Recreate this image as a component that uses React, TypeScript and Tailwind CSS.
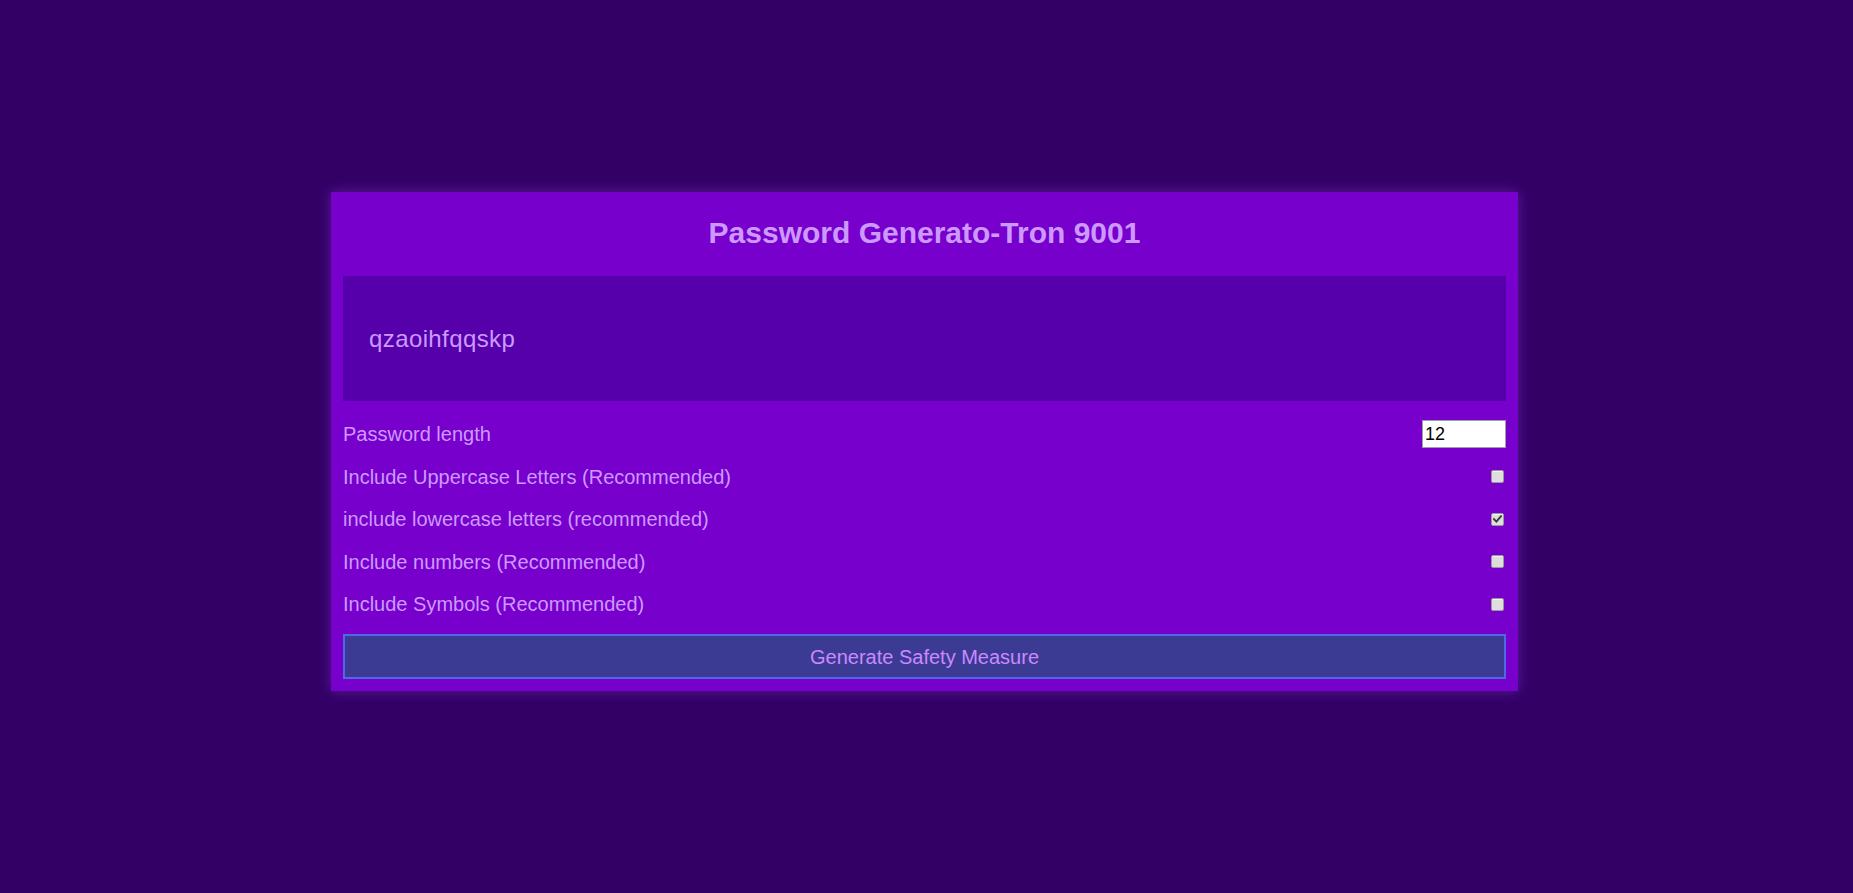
import { useState } from 'react';

const OPTIONS = [
  { id: 'upper', label: 'Include Uppercase Letters (Recommended)', checked: false },
  { id: 'lower', label: 'include lowercase letters (recommended)', checked: true },
  { id: 'numbers', label: 'Include numbers (Recommended)', checked: false },
  { id: 'symbols', label: 'Include Symbols (Recommended)', checked: false },
];

function Checkbox({ id, checked, onChange }: { id: string; checked: boolean; onChange: (v: boolean) => void }) {
  return (
    <label htmlFor={id} className="mr-[2px] flex h-[13px] w-[13px] cursor-pointer items-center justify-center rounded-[2px] border border-[#9a9a9a] bg-[#dedede] shadow-[inset_0_1px_0_#f2f2f2]">
      <input
        id={id}
        type="checkbox"
        checked={checked}
        onChange={(e) => onChange(e.target.checked)}
        className="sr-only"
      />
      {checked && (
        <svg width="9" height="8" viewBox="0 0 9 8">
          <path d="M1 4.2 L3.4 6.6 L8 1.2" fill="none" stroke="#3a3a3a" strokeWidth="1.9" strokeLinecap="square" />
        </svg>
      )}
    </label>
  );
}

export default function App() {
  const [length, setLength] = useState('12');
  const [opts, setOpts] = useState<Record<string, boolean>>(
    Object.fromEntries(OPTIONS.map((o) => [o.id, o.checked]))
  );

  return (
    <div
      className="min-h-screen bg-[#330066] pl-[331px] pt-[192px]"
      style={{ fontFamily: '"Liberation Sans", Arial, sans-serif' }}
    >
      <div className="w-[1187px] bg-[#7700cc] px-[12px] pb-[12px] shadow-[0_0_12px_#5c1a9e]">
        {/* Header */}
        <h1 className="pt-[24px] pb-[26px] text-center text-[30px] font-bold leading-[34px] text-[#cc99ff]">
          Password Generato-Tron 9001
        </h1>

        {/* Result */}
        <div className="flex h-[125px] items-center bg-[#5500aa] pl-[26px] text-[24px] tracking-[0.4px] text-[#cc99ff]">
          qzaoihfqqskp
        </div>

        {/* Settings */}
        <div className="mt-[12px] text-[20px] text-[#cc99ff]">
          <div className="flex h-[42.5px] items-center justify-between">
            <label htmlFor="length">Password length</label>
            <input
              id="length"
              type="number"
              value={length}
              onChange={(e) => setLength(e.target.value)}
              className="h-[28px] w-[84px] border border-[#a0a0a0] bg-white px-[2px] text-[18px] leading-none text-black outline-none [appearance:textfield] [&::-webkit-inner-spin-button]:appearance-none"
            />
          </div>
          {OPTIONS.map((o) => (
            <div key={o.id} className="flex h-[42.5px] items-center justify-between">
              <label htmlFor={o.id}>{o.label}</label>
              <Checkbox
                id={o.id}
                checked={opts[o.id]}
                onChange={(v) => setOpts({ ...opts, [o.id]: v })}
              />
            </div>
          ))}
        </div>

        <button
          type="button"
          className="mt-[8.5px] h-[45px] w-full border-2 border-[#4b6be6] bg-[#3b3b94] text-[20px] text-[#cc88ff]"
        >
          Generate Safety Measure
        </button>
      </div>
    </div>
  );
}
